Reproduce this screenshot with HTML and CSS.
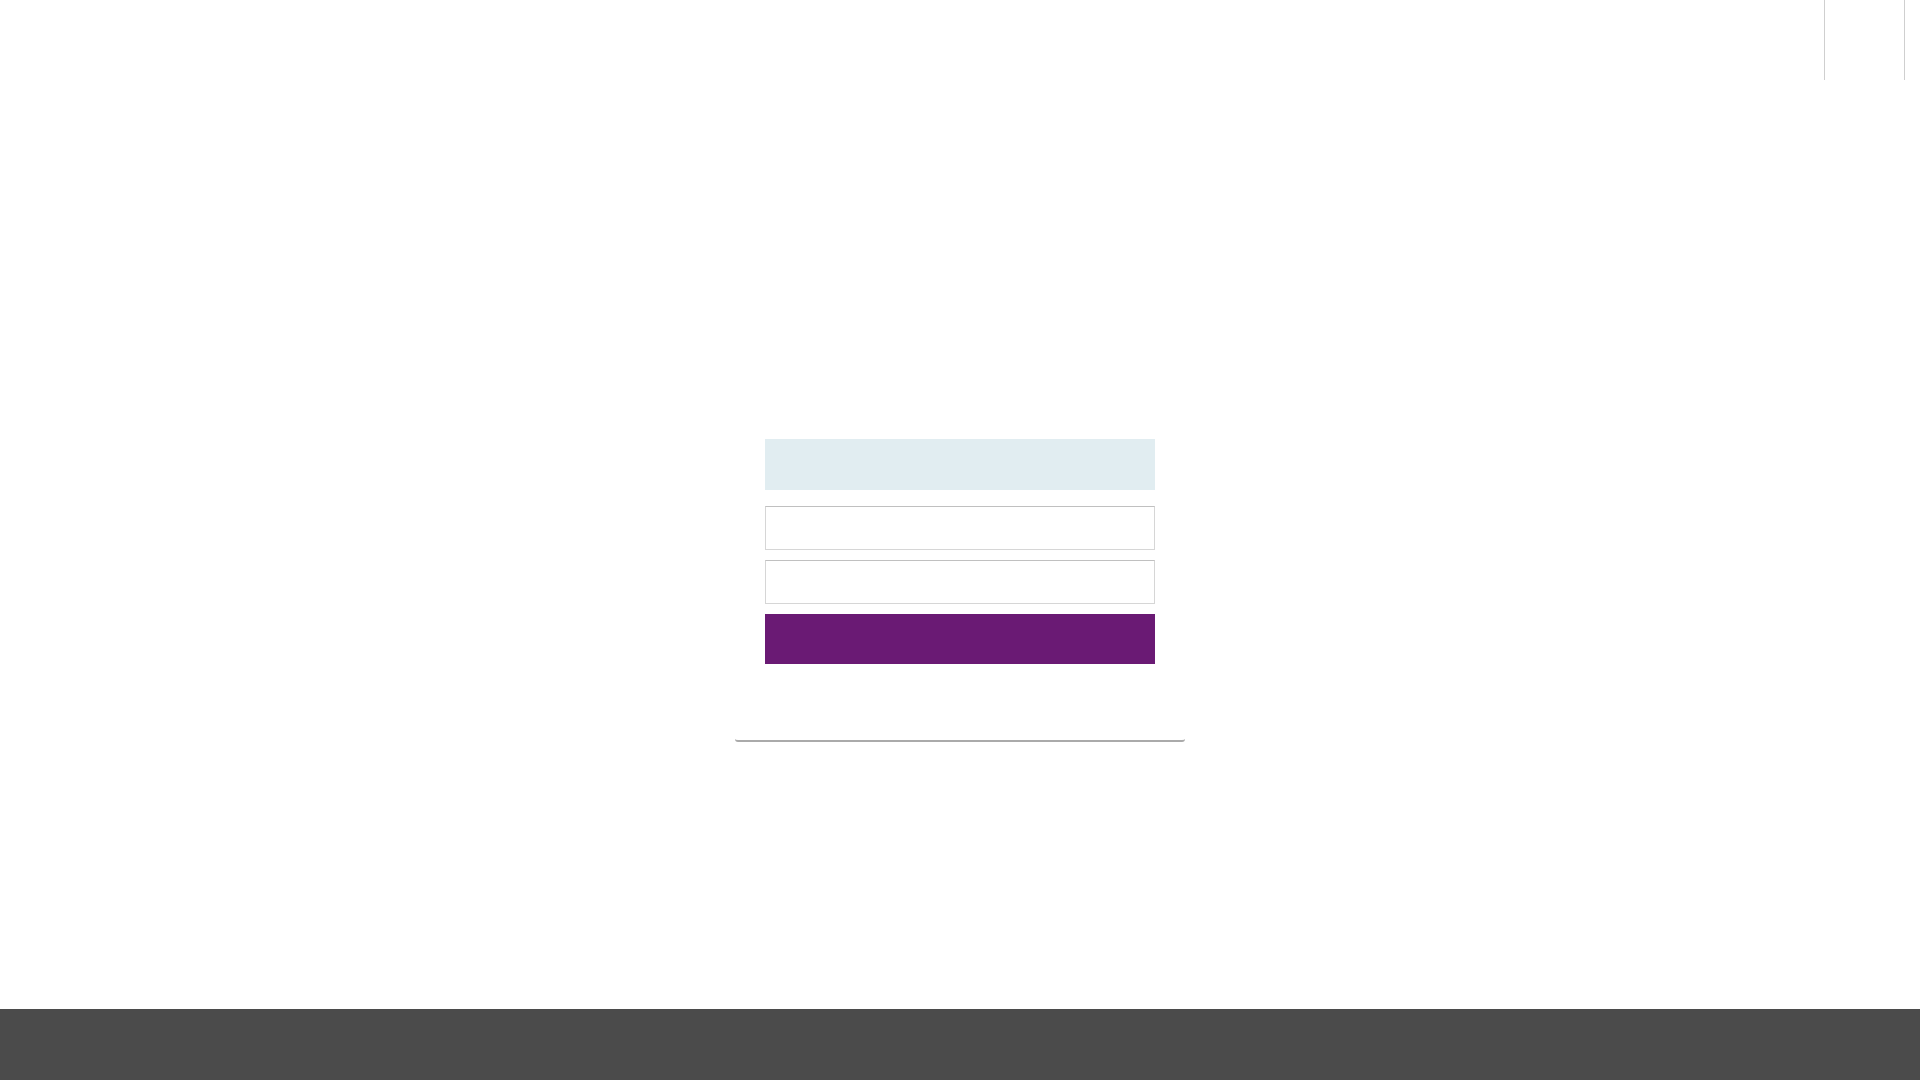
FILE: index.html
```html
<!DOCTYPE html>
<html lang="en">
<head>
<meta charset="utf-8">
<title>Login</title>
<link rel="stylesheet" href="styles.css">
</head>
<body>
<div class="page">
  <header class="header">
    <div class="nav-box"></div>
  </header>
  <main class="main">
    <div class="card">
      <div class="notice"></div>
      <input class="field first" type="text" aria-label="Username">
      <input class="field" type="password" aria-label="Password">
      <button class="submit" type="button" aria-label="Log in"></button>
    </div>
  </main>
  <footer class="footer"></footer>
</div>
</body>
</html>
```

FILE: styles.css
```css
html, body {
  margin: 0;
  padding: 0;
  background: #ffffff;
  font-family: "Liberation Sans", Arial, sans-serif;
}

.page {
  display: flex;
  flex-direction: column;
  min-height: 100vh;
}

.header {
  height: 80px;
  display: flex;
  justify-content: flex-end;
  padding-right: 15px;
}

.nav-box {
  width: 79px;
  height: 80px;
  border-left: 1px solid #cfcfcf;
  border-right: 1px solid #cfcfcf;
}

.main {
  flex: 1;
  display: flex;
  justify-content: center;
  align-items: flex-start;
  padding-top: 359px;
}

.card {
  width: 390px;
  padding: 0 30px 76px;
  border-bottom: 2px solid #aaaaaa;
  border-radius: 0 0 3px 3px;
  display: flex;
  flex-direction: column;
}

.notice {
  height: 51px;
  background: #e1edf1;
}

.field {
  box-sizing: border-box;
  height: 44px;
  width: 100%;
  margin: 10px 0 0;
  padding: 0 10px;
  border: 1px solid #d6d6d6;
  border-top-color: #c0c0c0;
  background: #ffffff;
  font: inherit;
}

.field.first {
  margin-top: 16px;
}

.submit {
  height: 50px;
  margin-top: 10px;
  border: 0;
  padding: 0;
  background: #6a1a74;
}

.footer {
  height: 71px;
  background: #4b4b4b;
}
```
